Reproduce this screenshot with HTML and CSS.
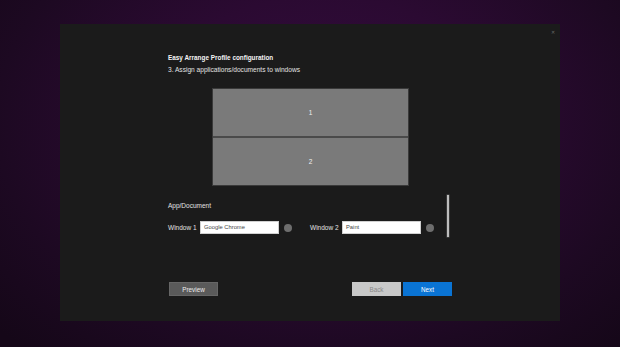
FILE: index.html
```html
<!DOCTYPE html>
<html>
<head>
<meta charset="utf-8">
<link rel="stylesheet" href="styles.css">
</head>
<body>
<div class="dialog">
  <div class="close">&#x2715;</div>
  <div class="content">
    <div class="title">Easy Arrange Profile configuration</div>
    <div class="subtitle">3. Assign applications/documents to windows</div>
    <div class="layout">
      <div class="pane">1</div>
      <div class="pane">2</div>
    </div>
    <div class="apps">
      <div class="apps-main">
        <div class="apps-label">App/Document</div>
        <div class="apps-row">
          <div class="slot">
            <span class="slot-label">Window 1</span>
            <div class="slot-input">Google Chrome</div>
            <span class="dot"></span>
          </div>
          <div class="slot slot-2">
            <span class="slot-label">Window 2</span>
            <div class="slot-input">Paint</div>
            <span class="dot"></span>
          </div>
        </div>
      </div>
      <div class="scrollbar"></div>
    </div>
    <div class="actions">
      <div class="btn btn-preview">Preview</div>
      <div class="nav">
        <div class="btn btn-back">Back</div>
        <div class="btn btn-next">Next</div>
      </div>
    </div>
  </div>
</div>
</body>
</html>
```

FILE: styles.css
```css
html, body {
  margin: 0;
  padding: 0;
}
body {
  width: 620px;
  height: 347px;
  overflow: hidden;
  font-family: "Liberation Sans", "Noto Sans", sans-serif;
  color: #e6e6e6;
  background: radial-gradient(ellipse 70% 90% at 52% 35%, #340c3e 0%, #2b0a32 40%, #1d0922 75%, #150718 100%);
  padding-top: 24px;
  box-sizing: border-box;
}
.dialog {
  position: relative;
  margin-left: 60px;
  width: 500px;
  height: 297px;
  background: #1b1b1b;
  box-sizing: border-box;
  padding: 30px 0 0 108px;
}
.close {
  position: absolute;
  top: 5px;
  right: 5px;
  font-size: 5px;
  color: #6a6a6a;
  line-height: 6px;
}
.content {
  width: 284px;
  display: flex;
  flex-direction: column;
}
.title {
  font-weight: bold;
  font-size: 6.4px;
  line-height: 8px;
  color: #f4f4f4;
  height: 8px;
}
.subtitle {
  margin-top: 4px;
  font-size: 6.6px;
  line-height: 8px;
  color: #e2e2e2;
}
.layout {
  margin-top: 14px;
  margin-left: 44px;
  width: 197px;
  height: 98px;
  background: #4a4a4a;
  border: 1px solid #3a3a3a;
  box-sizing: border-box;
  display: flex;
  flex-direction: column;
  gap: 2px;
}
.pane {
  flex: 1;
  background: #7a7a7a;
  display: flex;
  align-items: center;
  justify-content: center;
  font-size: 6.5px;
  color: #f0f0f0;
}
.apps {
  margin-top: 9px;
  display: flex;
  align-items: stretch;
  height: 42px;
}
.apps-main {
  flex: 1;
  display: flex;
  flex-direction: column;
}
.apps-label {
  margin-top: 7px;
  font-size: 6.5px;
  line-height: 8px;
  color: #e2e2e2;
}
.apps-row {
  margin-top: 11px;
  display: flex;
  align-items: center;
}
.slot {
  display: flex;
  align-items: center;
}
.slot-2 {
  margin-left: 18px;
}
.slot-label {
  font-size: 6.5px;
  color: #e2e2e2;
  width: 32px;
}
.slot-input {
  width: 79px;
  height: 13px;
  background: #ffffff;
  border: 1px solid #d0d0d0;
  box-sizing: border-box;
  font-size: 5.8px;
  color: #444;
  line-height: 11px;
  padding-left: 3px;
}
.dot {
  margin-left: 5px;
  width: 8px;
  height: 8px;
  border-radius: 50%;
  background: #6e6e6e;
}
.scrollbar {
  width: 2px;
  margin-right: 3px;
  background: #bdbdbd;
  box-shadow: 0 0 0 0.5px #555;
}
.actions {
  margin-top: 45px;
  display: flex;
  justify-content: space-between;
  align-items: center;
}
.nav {
  display: flex;
  gap: 2px;
}
.btn {
  width: 49px;
  height: 14px;
  box-sizing: border-box;
  display: flex;
  align-items: center;
  justify-content: center;
  font-size: 6.3px;
}
.btn-preview {
  margin-left: 1px;
  background: #5a5a5a;
  border: 1px solid #666;
  color: #ececec;
}
.btn-back {
  background: #c8c8c8;
  color: #888888;
}
.btn-next {
  background: #0a74d4;
  color: #ffffff;
}
```
